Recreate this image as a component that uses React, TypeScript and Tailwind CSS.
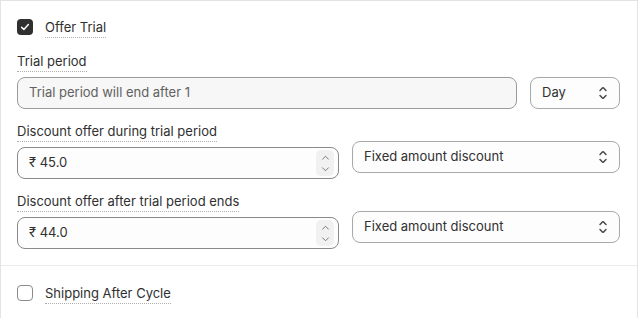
import React from "react";

const SelectIcon = () => (
  <svg viewBox="0 0 20 20" className="w-5 h-5 fill-[#4a4a4a]">
    <path d="M10.884 4.323a1.25 1.25 0 0 0-1.768 0l-2.646 2.647a.75.75 0 0 0 1.06 1.06l2.47-2.470 2.47 2.47a.75.75 0 1 0 1.06-1.060l-2.646-2.647Z" />
    <path d="m13.53 13.03-2.646 2.647a1.25 1.25 0 0 1-1.768 0l-2.646-2.647a.75.75 0 0 1 1.06-1.06l2.47 2.47 2.47-2.47a.75.75 0 0 1 1.06 1.06Z" />
  </svg>
);

const Spinner = () => (
  <div className="w-[18px] h-[26px] rounded-[5px] bg-[#f1f1f1] flex flex-col items-center justify-center gap-[7px]">
    <svg viewBox="0 0 10 6" className="w-[9px] h-[5px]">
      <path d="M1.5 5 L5 1.5 L8.5 5" fill="none" stroke="#707070" strokeWidth="1.1" strokeLinecap="round" strokeLinejoin="round" />
    </svg>
    <svg viewBox="0 0 10 6" className="w-[9px] h-[5px]">
      <path d="M1.5 1 L5 4.5 L8.5 1" fill="none" stroke="#707070" strokeWidth="1.1" strokeLinecap="round" strokeLinejoin="round" />
    </svg>
  </div>
);

const Label = ({ children }: { children: React.ReactNode }) => (
  <div className="h-[21px] mb-[5px]">
    <span className="inline-block leading-[20px] border-b border-dotted border-[#b0b0b0] text-[#303030]">
      {children}
    </span>
  </div>
);

const Select = ({ value, className = "" }: { value: string; className?: string }) => (
  <div
    className={
      "h-[32px] rounded-[8px] border border-[#a8a8a8] bg-[#fdfdfd] flex items-center justify-between pl-[11px] pr-[6px] " +
      className
    }
  >
    <span className="text-[#303030]">{value}</span>
    <SelectIcon />
  </div>
);

const MoneyInput = ({ value }: { value: string }) => (
  <div className="h-[32px] rounded-[8px] border border-[#8a8a8a] bg-[#fdfdfd] flex items-center justify-between pl-[11px] pr-[4px]">
    <span className="text-[#303030]">{value}</span>
    <Spinner />
  </div>
);

const CheckboxRow = ({ checked, label }: { checked: boolean; label: string }) => (
  <div className="flex items-center h-[20px]">
    {checked ? (
      <div className="w-4 h-4 rounded-[4px] bg-[#303030] flex items-center justify-center">
        <svg viewBox="0 0 16 16" className="w-[12px] h-[12px]">
          <path d="M3.5 8.5 L6.5 11.2 L12.5 4.8" fill="none" stroke="#fff" strokeWidth="2" strokeLinecap="round" strokeLinejoin="round" />
        </svg>
      </div>
    ) : (
      <div className="w-4 h-4 rounded-[4px] border border-[#8a8a8a] bg-white" />
    )}
    <span className="ml-[12px] inline-block leading-[20px] border-b border-dotted border-[#b0b0b0] text-[#303030]">
      {label}
    </span>
  </div>
);

export default function App() {
  return (
    <div
      className="w-[638px] h-[318px] bg-white border-l border-r border-t border-[#e3e3e3] text-[13px] text-[#303030] overflow-hidden"
      style={{ fontFamily: "Inter, 'Noto Sans', sans-serif" }}
    >
      <div className="px-4 pt-4 pb-4">
        <CheckboxRow checked label="Offer Trial" />
        <div className="mt-[14px]">
          <Label>Trial period</Label>
          <div className="flex gap-[13px]">
            <div className="w-[500px] h-[32px] rounded-[8px] border border-[#9a9a9a] bg-[#f7f7f7] flex items-center pl-[11px]">
              <span className="text-[#616161]">Trial period will end after 1</span>
            </div>
            <Select value="Day" className="w-[90px]" />
          </div>
        </div>
        <div className="mt-[12px] flex gap-[13px]">
          <div className="w-[322px]">
            <Label>Discount offer during trial period</Label>
            <MoneyInput value="₹ 45.0" />
          </div>
          <Select value="Fixed amount discount" className="w-[268px] mt-[20px]" />
        </div>
        <div className="mt-[12px] flex gap-[13px]">
          <div className="w-[322px]">
            <Label>Discount offer after trial period ends</Label>
            <MoneyInput value="₹ 44.0" />
          </div>
          <Select value="Fixed amount discount" className="w-[268px] mt-[20px]" />
        </div>
      </div>
      <div className="border-t border-[#ebebeb] px-4 pt-[17px]">
        <CheckboxRow checked={false} label="Shipping After Cycle" />
      </div>
    </div>
  );
}
